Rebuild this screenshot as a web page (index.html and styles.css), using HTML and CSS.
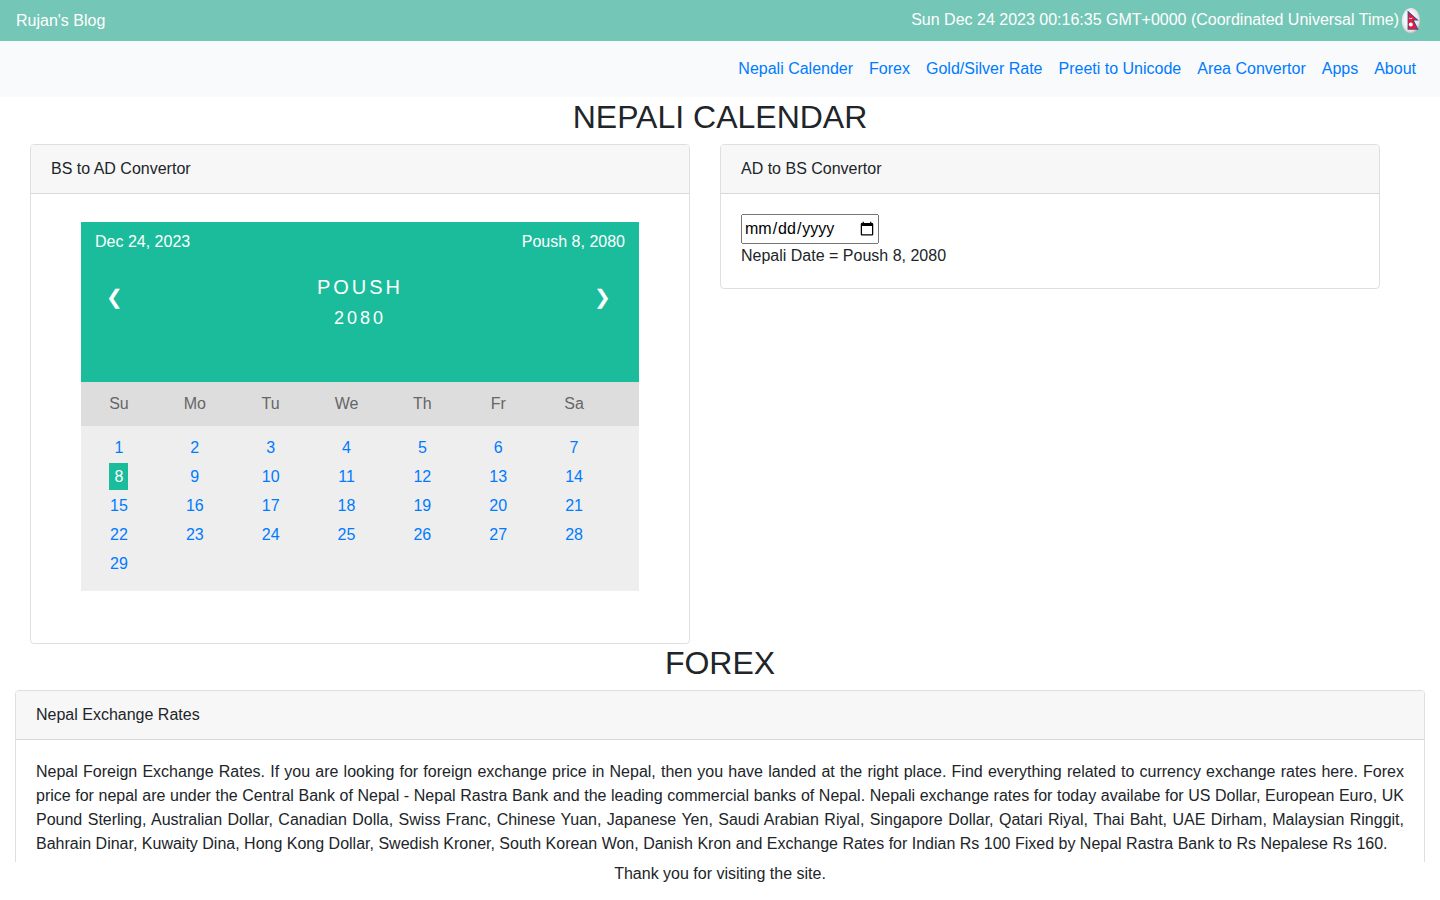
FILE: index.html
```html
<!DOCTYPE html>
<html lang="en">
<head>
<meta charset="utf-8">
<title>Rujan's Blog</title>
<link rel="stylesheet" href="styles.css">
</head>
<body>
<header class="topbar">
  <a class="brand" href="#">Rujan's Blog</a>
  <div class="clock">
    <span>Sun Dec 24 2023 00:16:35 GMT+0000 (Coordinated Universal Time)</span>
    <svg class="flag" viewBox="0 0 20 26" role="img" aria-label="Flag of Nepal">
      <defs>
        <radialGradient id="pearl" cx="45%" cy="45%" r="58%">
          <stop offset="0.5" stop-color="#f6f6f6"/>
          <stop offset="0.8" stop-color="#e2e2e2"/>
          <stop offset="1" stop-color="#a3a9a8"/>
        </radialGradient>
      </defs>
      <ellipse cx="10" cy="12.8" rx="9.3" ry="12.7" fill="url(#pearl)"/>
      <path d="M6.6 2.6L17.8 12.6H13L17.6 21.8H6.6Z" fill="#24539c"/>
      <path d="M7.4 4.4L15.8 11.8H11.4L16.4 21H7.4Z" fill="#e8193c"/>
      <path d="M7.9 8.6A1.8 1.8 0 0 0 11.5 8.6L11 11H8.4Z" fill="#fff"/>
      <circle cx="9.8" cy="16.6" r="2" fill="#fff"/>
    </svg>
  </div>
</header>
<nav class="menu">
  <a href="#calendar">Nepali Calender</a>
  <a href="#forex">Forex</a>
  <a href="#">Gold/Silver Rate</a>
  <a href="#">Preeti to Unicode</a>
  <a href="#">Area Convertor</a>
  <a href="#">Apps</a>
  <a href="#">About</a>
</nav>
<main>
  <h2 id="calendar">NEPALI CALENDAR</h2>
  <div class="convertors">
    <section class="card">
      <div class="card-header">BS to AD Convertor</div>
      <div class="card-body">
        <div class="calendar">
          <div class="month">
            <div class="today"><span>Dec 24, 2023</span><span>Poush 8, 2080</span></div>
            <div class="month-nav">
              <button type="button" class="arrow" aria-label="Previous month">&#10094;</button>
              <div class="month-title">
                <div class="month-name">POUSH</div>
                <div class="month-year">2080</div>
              </div>
              <button type="button" class="arrow" aria-label="Next month">&#10095;</button>
            </div>
          </div>
          <table class="days">
            <thead>
              <tr><th>Su</th><th>Mo</th><th>Tu</th><th>We</th><th>Th</th><th>Fr</th><th>Sa</th></tr>
            </thead>
            <tbody>
              <tr><td><a href="#">1</a></td><td><a href="#">2</a></td><td><a href="#">3</a></td><td><a href="#">4</a></td><td><a href="#">5</a></td><td><a href="#">6</a></td><td><a href="#">7</a></td></tr>
              <tr><td><a class="active" href="#">8</a></td><td><a href="#">9</a></td><td><a href="#">10</a></td><td><a href="#">11</a></td><td><a href="#">12</a></td><td><a href="#">13</a></td><td><a href="#">14</a></td></tr>
              <tr><td><a href="#">15</a></td><td><a href="#">16</a></td><td><a href="#">17</a></td><td><a href="#">18</a></td><td><a href="#">19</a></td><td><a href="#">20</a></td><td><a href="#">21</a></td></tr>
              <tr><td><a href="#">22</a></td><td><a href="#">23</a></td><td><a href="#">24</a></td><td><a href="#">25</a></td><td><a href="#">26</a></td><td><a href="#">27</a></td><td><a href="#">28</a></td></tr>
              <tr><td><a href="#">29</a></td></tr>
            </tbody>
          </table>
        </div>
      </div>
    </section>
    <section class="card">
      <label class="card-header" for="ad-date">AD to BS Convertor</label>
      <div class="card-body">
        <input class="date" id="ad-date" type="date">
        <div>Nepali Date = Poush 8, 2080</div>
      </div>
    </section>
  </div>
  <h2 id="forex">FOREX</h2>
  <section class="card forex">
    <div class="card-header">Nepal Exchange Rates</div>
    <div class="card-body">
      <p>Nepal Foreign Exchange Rates. If you are looking for foreign exchange price in Nepal, then you have landed at the right place. Find everything related to currency exchange rates here. Forex price for nepal are under the Central Bank of Nepal - Nepal Rastra Bank and the leading commercial banks of Nepal. Nepali exchange rates for today availabe for US Dollar, European Euro, UK Pound Sterling, Australian Dollar, Canadian Dolla, Swiss Franc, Chinese Yuan, Japanese Yen, Saudi Arabian Riyal, Singapore Dollar, Qatari Riyal, Thai Baht, UAE Dirham, Malaysian Ringgit, Bahrain Dinar, Kuwaity Dina, Hong Kong Dollar, Swedish Kroner, South Korean Won, Danish Kron and Exchange Rates for Indian Rs 100 Fixed by Nepal Rastra Bank to Rs Nepalese Rs 160.</p>
    </div>
  </section>
</main>
<footer class="footer">Thank you for visiting the site.</footer>
</body>
</html>
```
FILE: styles.css
```css
* { box-sizing: border-box; }

body {
  margin: 0;
  background: #fff;
  color: #212529;
  font: 16px/24px "Liberation Sans", Arial, sans-serif;
}

a { color: #007bff; text-decoration: none; }

.topbar {
  display: flex;
  justify-content: space-between;
  align-items: flex-end;
  padding: 8px 19px 8px 16px;
  background: #74c6b6;
  color: #fff;
}
.brand { color: #fff; }
.clock { display: flex; align-items: flex-start; gap: 2px; height: 25px; }
.flag { width: 20px; height: 26px; }

.menu {
  display: flex;
  justify-content: flex-end;
  gap: 16px;
  padding: 16px 24px;
  background: #f8fafc;
}

main { padding-top: 1px; }

h2 {
  margin: 0 0 8px;
  font-size: 32px;
  font-weight: 400;
  line-height: 38px;
  text-align: center;
}

.convertors {
  display: grid;
  grid-template-columns: 1fr 1fr;
  align-items: start;
  gap: 30px;
  padding: 0 60px 0 30px;
}

.card {
  border: 1px solid #dfdfdf;
  border-radius: 4px;
  background: #fff;
}
.card-header {
  display: block;
  padding: 12px 20px;
  border-bottom: 1px solid #d8d8d8;
  border-radius: 3px 3px 0 0;
  background: #f7f7f7;
}
.card-body { padding: 20px; }

.calendar { margin: 8px 30px 32px; }
.month {
  padding: 8px 14px 48px;
  background: #1bbc9b;
  color: #fff;
}
.today { display: flex; justify-content: space-between; }
.month-nav {
  display: flex;
  justify-content: space-between;
  align-items: flex-start;
  margin-top: 18px;
  padding: 0 11px;
  letter-spacing: 3px;
}
.month-title { text-align: center; }
.month-name { font-size: 20px; line-height: 31px; }
.month-year { font-size: 18px; line-height: 31px; }
.arrow {
  margin: 10px 0 0;
  padding: 0;
  border: 0;
  background: none;
  color: #fff;
  font: 20px/30px "Liberation Sans", Arial, sans-serif;
  letter-spacing: inherit;
}

.days,
.days thead,
.days tbody { display: block; }
.days tr {
  display: grid;
  grid-template-columns: repeat(7, 1fr);
  padding-right: 27px;
}
.days th,
.days td { padding: 0; text-align: center; }
.days thead { padding: 10px 0; background: #ddd; }
.days th { color: #666; font-weight: 400; }
.days tbody { padding: 7px 0 13px; background: #eee; }
.days td { line-height: 29px; }
.days .active { padding: 5px; background: #1bbc9b; color: #fff; }

.date {
  display: block;
  font-family: inherit;
  font-size: 16px;
  line-height: 24px;
}

.forex { margin: 0 15px; }
.forex p { margin: 0; text-align: justify; }

.footer {
  position: fixed;
  right: 0;
  bottom: 0;
  left: 0;
  padding: 0 0 14px;
  background: #fff;
  text-align: center;
}
```
